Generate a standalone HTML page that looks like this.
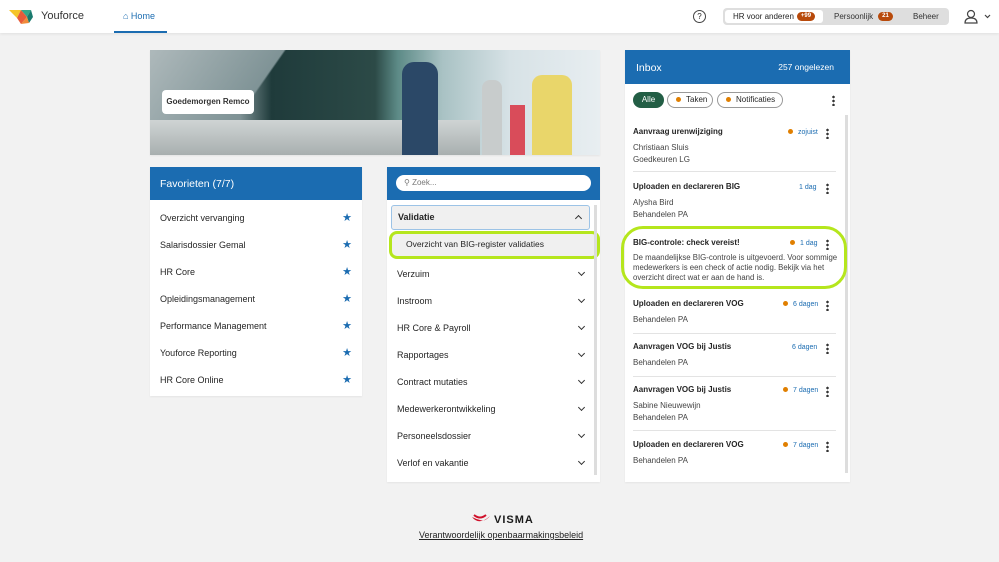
<!DOCTYPE html>
<html><head><meta charset="utf-8"><style>
*{box-sizing:border-box;margin:0;padding:0}
body{width:999px;height:562px;overflow:hidden;background:#f2f2f2;font-family:"Liberation Sans",sans-serif;font-size:9px;color:#252525;position:relative}
.abs{position:absolute}
.hdr{left:0;top:0;width:999px;height:33px;background:#fff;box-shadow:0 1px 3px rgba(0,0,0,.08)}
.card{background:#fff;position:absolute;box-shadow:0 1px 2px rgba(0,0,0,.06)}
.blue{background:#1b6cb1;color:#fff}
.row{position:absolute;left:10px;font-size:9px}
.star{position:absolute;right:10px;color:#1b6cb1;font-size:11px}
.chev{position:absolute;right:16px;width:5px;height:5px;border-right:1.5px solid #333;border-bottom:1.5px solid #333;transform:rotate(45deg);margin-top:1px}
.dots{position:absolute;width:3px;height:11px;background:radial-gradient(circle,#333 1.2px,transparent 1.4px) 0 0/3px 4px repeat-y}
.od{display:inline-block;width:5px;height:5px;border-radius:50%;background:#e07f00;margin-right:5px}
.t{font-weight:bold;font-size:8px}
.s{font-size:8px;color:#444}
.time{position:absolute;font-size:7px;color:#1b6cb1}
.sep{position:absolute;left:8px;width:203px;height:1px;background:#e3e3e3}
</style></head><body>
<div class="abs hdr"></div>
<svg class="abs" style="left:9px;top:8px" width="24" height="17" viewBox="0 0 24 17"><polygon points="0,2 12,2 8,10" fill="#f5c52a"/><polygon points="12,2 22,2 18,9" fill="#36a889"/><polygon points="8,10 12,2 18,9 12,16" fill="#e85b3a"/><polygon points="18,9 22,2 24,9 20,15" fill="#1a7a6e"/><polygon points="12,16 18,9 20,15" fill="#f08a3a"/></svg>
<div class="abs" style="left:41px;top:10px;font-size:11px;color:#333">Youforce</div>
<div class="abs" style="left:123px;top:11px;font-size:9px;color:#1b6cb1">⌂ Home</div>
<div class="abs" style="left:114px;top:31px;width:53px;height:2px;background:#1b6cb1"></div>
<div class="abs" style="left:693px;top:10px;width:13px;height:13px;border:1.3px solid #444;border-radius:50%;font-size:8px;text-align:center;line-height:11px">?</div>
<div class="abs" style="left:723px;top:8px;width:226px;height:17px;background:#dedede;border-radius:4px"></div>
<div class="abs" style="left:725px;top:10px;width:98px;height:13px;background:#fff;border-radius:3px"></div>
<div class="abs" style="left:733px;top:12px;font-size:8px">HR voor anderen</div>
<div class="abs" style="left:797px;top:12px;width:18px;height:9px;background:#b84a0b;border-radius:5px;color:#fff;font-size:6px;text-align:center;line-height:9px;font-weight:bold">+99</div>
<div class="abs" style="left:834px;top:12px;font-size:8px;color:#333">Persoonlijk</div>
<div class="abs" style="left:878px;top:12px;width:15px;height:9px;background:#b84a0b;border-radius:5px;color:#fff;font-size:6px;text-align:center;line-height:9px;font-weight:bold">21</div>
<div class="abs" style="left:913px;top:12px;font-size:8px;color:#333">Beheer</div>
<svg class="abs" style="left:964px;top:9px" width="30" height="15"><circle cx="7" cy="5" r="3.5" fill="none" stroke="#444" stroke-width="1.2"/><path d="M1 14 Q1 9 7 9 Q13 9 13 14 Z" fill="none" stroke="#444" stroke-width="1.2"/><path d="M21 6 l2.5 2.5 l2.5 -2.5" fill="none" stroke="#444" stroke-width="1.2"/></svg>

<div class="card" style="left:150px;top:50px;width:450px;height:105px;overflow:hidden;background:linear-gradient(90deg,#9aa9ad 0%,#7f9295 20%,#1f3b3b 27%,#2c4a47 50%,#5c8a86 55%,#a9c2c4 65%,#d7e2e6 80%,#e8eef1 100%)">
<div class="abs" style="left:0;top:0;width:150px;height:105px;background:linear-gradient(125deg,#aeb9bb 0%,#7f9396 60%,transparent 61%)"></div>
<div class="abs" style="left:0;top:70px;width:330px;height:35px;background:linear-gradient(180deg,#cfd4d4,#a8afaf)"></div>
<div class="abs" style="left:252px;top:12px;width:36px;height:93px;background:#2b4867;border-radius:12px 12px 0 0"></div>
<div class="abs" style="left:332px;top:30px;width:20px;height:75px;background:#c8cccc;border-radius:8px 8px 0 0"></div>
<div class="abs" style="left:360px;top:55px;width:15px;height:50px;background:#d94c5a"></div>
<div class="abs" style="left:382px;top:25px;width:40px;height:80px;background:#e9d66a;border-radius:10px 10px 0 0"></div>
<div class="abs" style="left:12px;top:40px;width:92px;height:24px;background:#fff;border-radius:4px;font-size:8px;font-weight:bold;line-height:24px;text-align:center;color:#333">Goedemorgen Remco</div>
</div>

<div class="card" style="left:150px;top:167px;width:212px;height:229px">
<div class="blue abs" style="left:0;top:0;width:212px;height:33px;font-size:10.5px;padding:11px 10px">Favorieten (7/7)</div>
<div class="row" style="top:46px">Overzicht vervanging</div><div class="star" style="top:44px">★</div>
<div class="row" style="top:73px">Salarisdossier Gemal</div><div class="star" style="top:71px">★</div>
<div class="row" style="top:100px">HR Core</div><div class="star" style="top:98px">★</div>
<div class="row" style="top:127px">Opleidingsmanagement</div><div class="star" style="top:125px">★</div>
<div class="row" style="top:154px">Performance Management</div><div class="star" style="top:152px">★</div>
<div class="row" style="top:181px">Youforce Reporting</div><div class="star" style="top:179px">★</div>
<div class="row" style="top:208px">HR Core Online</div><div class="star" style="top:206px">★</div>
</div>

<div class="card" style="left:387px;top:167px;width:213px;height:315px">
<div class="blue abs" style="left:0;top:0;width:213px;height:33px"></div>
<div class="abs" style="left:9px;top:8px;width:195px;height:16px;background:#fff;border-radius:8px;font-size:8px;color:#777;padding:3px 8px">⚲ Zoek...</div>
<div class="abs" style="left:4px;top:38px;width:199px;height:25px;background:#f0f0f0;border:1px solid #9cc3e6;border-radius:3px"></div>
<div class="abs" style="left:11px;top:45px;font-weight:bold">Validatie</div>
<div class="abs" style="left:189px;top:49px;width:5px;height:5px;border-left:1.5px solid #333;border-top:1.5px solid #333;transform:rotate(45deg)"></div>
<div class="abs" style="left:2px;top:64px;width:211px;height:28px;background:#f0f0f0;border:3px solid #b5e61d;border-radius:8px"></div>
<div class="abs" style="left:19px;top:72px;font-size:8.5px">Overzicht van BIG-register validaties</div>
<div class="abs" style="left:207px;top:38px;width:3px;height:270px;background:#ddd"></div>
<div class="row" style="top:102px">Verzuim</div><div class="chev" style="top:102px"></div>
<div class="row" style="top:129px">Instroom</div><div class="chev" style="top:129px"></div>
<div class="row" style="top:156px">HR Core &amp; Payroll</div><div class="chev" style="top:156px"></div>
<div class="row" style="top:183px">Rapportages</div><div class="chev" style="top:183px"></div>
<div class="row" style="top:210px">Contract mutaties</div><div class="chev" style="top:210px"></div>
<div class="row" style="top:237px">Medewerkerontwikkeling</div><div class="chev" style="top:237px"></div>
<div class="row" style="top:264px">Personeelsdossier</div><div class="chev" style="top:264px"></div>
<div class="row" style="top:291px">Verlof en vakantie</div><div class="chev" style="top:291px"></div>
</div>

<div class="card" style="left:625px;top:50px;width:225px;height:432px">
<div class="blue abs" style="left:0;top:0;width:225px;height:34px"></div>
<div class="abs" style="left:11px;top:12px;color:#fff;font-size:10.5px">Inbox</div>
<div class="abs" style="right:16px;top:12px;color:#fff;font-size:8.5px">257 ongelezen</div>
<div class="abs" style="left:8px;top:42px;width:31px;height:16px;background:#235e45;border-radius:8px;color:#fff;font-size:8px;text-align:center;line-height:16px">Alle</div>
<div class="abs" style="left:42px;top:42px;width:46px;height:16px;border:1px solid #999;border-radius:8px;font-size:8px;line-height:14px;padding-left:8px"><span class="od"></span>Taken</div>
<div class="abs" style="left:92px;top:42px;width:66px;height:16px;border:1px solid #999;border-radius:8px;font-size:8px;line-height:14px;padding-left:8px"><span class="od"></span>Notificaties</div>
<div class="dots" style="left:207px;top:45px"></div>
<div class="abs" style="left:220px;top:65px;width:3px;height:358px;background:#ddd"></div>

<div class="abs t" style="left:8px;top:77px">Aanvraag urenwijziging</div>
<div class="time" style="left:163px;top:79px"><span class="od"></span>zojuist</div><div class="dots" style="left:201px;top:78px"></div>
<div class="abs s" style="left:8px;top:93px">Christiaan Sluis</div>
<div class="abs s" style="left:8px;top:105px">Goedkeuren LG</div>
<div class="sep" style="top:121px"></div>
<div class="abs t" style="left:8px;top:132px">Uploaden en declareren BIG</div>
<div class="time" style="left:174px;top:134px">1 dag</div><div class="dots" style="left:201px;top:133px"></div>
<div class="abs s" style="left:8px;top:148px">Alysha Bird</div>
<div class="abs s" style="left:8px;top:160px">Behandelen PA</div>
<div class="abs" style="left:-4px;top:176px;width:226px;height:63px;border:3px solid #b5e61d;border-radius:22px"></div>
<div class="abs t" style="left:8px;top:188px">BIG-controle: check vereist!</div>
<div class="time" style="left:165px;top:190px"><span class="od"></span>1 dag</div><div class="dots" style="left:201px;top:189px"></div>
<div class="abs s" style="left:8px;top:203px;width:215px;line-height:10px;font-size:7.8px">De maandelijkse BIG-controle is uitgevoerd. Voor sommige medewerkers is een check of actie nodig. Bekijk via het overzicht direct wat er aan de hand is.</div>
<div class="abs t" style="left:8px;top:249px">Uploaden en declareren VOG</div>
<div class="time" style="left:158px;top:251px"><span class="od"></span>6 dagen</div><div class="dots" style="left:201px;top:250px"></div>
<div class="abs s" style="left:8px;top:265px">Behandelen PA</div>
<div class="sep" style="top:283px"></div>
<div class="abs t" style="left:8px;top:292px">Aanvragen VOG bij Justis</div>
<div class="time" style="left:167px;top:294px">6 dagen</div><div class="dots" style="left:201px;top:293px"></div>
<div class="abs s" style="left:8px;top:308px">Behandelen PA</div>
<div class="sep" style="top:326px"></div>
<div class="abs t" style="left:8px;top:335px">Aanvragen VOG bij Justis</div>
<div class="time" style="left:158px;top:337px"><span class="od"></span>7 dagen</div><div class="dots" style="left:201px;top:336px"></div>
<div class="abs s" style="left:8px;top:351px">Sabine Nieuwewijn</div>
<div class="abs s" style="left:8px;top:363px">Behandelen PA</div>
<div class="sep" style="top:380px"></div>
<div class="abs t" style="left:8px;top:390px">Uploaden en declareren VOG</div>
<div class="time" style="left:158px;top:392px"><span class="od"></span>7 dagen</div><div class="dots" style="left:201px;top:391px"></div>
<div class="abs s" style="left:8px;top:406px">Behandelen PA</div>
</div>

<svg class="abs" style="left:471px;top:514px" width="20" height="11"><path d="M1 3 Q8 12 19 2 Q14 8 9 6 Q5 5 1 3Z" fill="#d0102a"/><path d="M3 1 Q9 6 15 1" stroke="#d0102a" stroke-width="2" fill="none"/></svg>
<div class="abs" style="left:494px;top:514px;font-size:11px;font-weight:bold;letter-spacing:1px;color:#1a1a1a">VISMA</div>
<div class="abs" style="left:419px;top:530px;font-size:9px;text-decoration:underline;color:#222">Verantwoordelijk openbaarmakingsbeleid</div>
</body></html>
